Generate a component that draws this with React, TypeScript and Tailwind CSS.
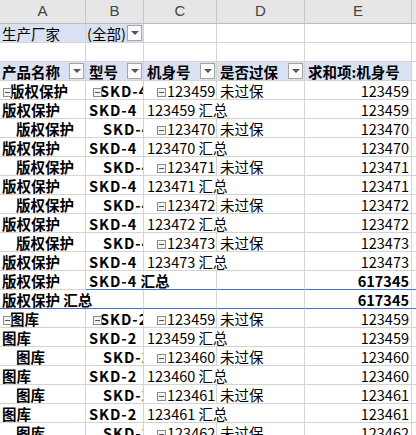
import type { ReactNode } from "react";

// column widths incl. right gridline
const COLS = [86, 58, 73, 88, 107];
const LETTERS = ["A", "B", "C", "D", "E"];

interface Cell {
  t?: ReactNode;
  span?: number;
  bold?: boolean;
  right?: boolean;
  wide?: boolean;
  pl?: number;
  icon?: number; // left offset of the ⊟ box
  bg?: boolean;
  dd?: boolean;
}

function Minus({ left }: { left: number }) {
  return (
    <span
      className="absolute top-[7px] flex h-[9px] w-[9px] items-center justify-center border border-[#8c8c8c] bg-[#f4f4f4]"
      style={{ left }}
    >
      <span className="h-px w-[5px] bg-[#555]" />
    </span>
  );
}

function Dropdown() {
  return (
    <span className="absolute right-[1px] top-[1px] flex h-[16px] w-[15px] items-center justify-center border border-[#a6a6a6] bg-[#fafafa]">
      <span className="h-0 w-0 border-x-[4px] border-t-[4px] border-x-transparent border-t-[#555]" />
    </span>
  );
}

function Row({ cells, blue }: { cells: Cell[]; blue?: number }) {
  let col = 0;
  return (
    <div className="flex h-[19px]">
      {cells.map((c, i) => {
        const span = c.span ?? 1;
        const w = COLS.slice(col, col + span).reduce((a, b) => a + b, 0);
        const isBlue = blue !== undefined && col >= blue;
        col += span;
        return (
          <div
            key={i}
            className={`relative shrink-0 overflow-hidden whitespace-nowrap border-r border-r-[#d4d4d4] border-b text-[14.5px] leading-[20px] text-black ${
              isBlue ? "border-b-[#4472c4]" : "border-b-[#d4d4d4]"
            } ${c.bg ? "bg-[#d9e1f2]" : "bg-white"} ${c.bold ? "font-bold" : ""} ${
              c.right ? "pr-[2px] text-right" : ""
            } ${c.wide ? "tracking-[1px]" : ""}`}
            style={{ width: w, paddingLeft: c.right ? 0 : c.pl ?? 2 }}
          >
            {c.icon !== undefined && <Minus left={c.icon} />}
            {c.t}
            {c.dd && <Dropdown />}
          </div>
        );
      })}
      <div
        className={`flex-1 border-b ${blue !== undefined ? "border-b-[#4472c4]" : "border-b-[#d4d4d4]"}`}
      />
    </div>
  );
}

function group(name: string, model: string, ids: string[], last: string): Cell[][] {
  const rows: Cell[][] = [];
  ids.forEach((id, k) => {
    rows.push([
      k === 0
        ? { t: name, bold: true, icon: 3, pl: 10 }
        : { t: name, bold: true, pl: 16 },
      k === 0
        ? { t: model, bold: true, wide: true, icon: 7, pl: 14 }
        : { t: model, bold: true, wide: true, pl: 17 },
      { t: id, icon: 13, pl: 23 },
      { t: "未过保", pl: 3 },
      { t: id, right: true },
    ]);
    rows.push([
      { t: name, bold: true },
      { t: model, bold: true, wide: true, pl: 3 },
      { t: `${id} 汇总`, pl: 3, span: 2 },
      { t: id, right: true },
    ]);
  });
  if (last) {
    rows.push([
      { t: name, bold: true },
      {
        t: (
          <>
            <span className="tracking-[1px]">{model}</span> 汇总
          </>
        ),
        bold: true,
        pl: 3,
        span: 2,
      },
      {},
      { t: last, right: true, bold: true },
    ]);
  }
  return rows;
}

export default function App() {
  const g1 = group("版权保护", "SKD-4", ["123459", "123470", "123471", "123472", "123473"], "617345");
  const g2 = group("图库", "SKD-2", ["123459", "123460", "123461", "123462"], "");

  return (
    <div
      className="h-[435px] w-[416px] overflow-hidden bg-white"
      style={{ fontFamily: '"Noto Sans CJK SC", "Liberation Sans", sans-serif' }}
    >
      <div className="flex h-[24px] border-b border-b-[#bcbcbc] bg-[#e6e6e6]">
        {LETTERS.map((l, i) => (
          <div
            key={l}
            className="flex shrink-0 items-center justify-center border-r border-r-[#c6c6c6] text-[15px] text-[#444]"
            style={{ width: COLS[i], fontFamily: '"Liberation Sans", sans-serif' }}
          >
            {l}
          </div>
        ))}
        <div className="flex-1" />
      </div>

      <Row
        cells={[
          { t: "生产厂家", bg: true },
          { t: "(全部)", bg: true, pl: 1, dd: true },
          {},
          {},
          {},
        ]}
      />
      <Row cells={[{}, {}, {}, {}, {}]} />
      <Row
        cells={[
          { t: "产品名称", bg: true, bold: true, dd: true },
          { t: "型号", bg: true, bold: true, pl: 3, dd: true },
          { t: "机身号", bg: true, bold: true, pl: 3, dd: true },
          { t: "是否过保", bg: true, bold: true, pl: 3, dd: true },
          { t: "求和项:机身号", bg: true, bold: true, pl: 3 },
        ]}
      />
      {g1.map((r, i) => (
        <Row key={`a${i}`} cells={r} blue={i === g1.length - 1 ? 1 : undefined} />
      ))}
      <Row
        blue={0}
        cells={[
          { t: "版权保护 汇总", bold: true, span: 2 },
          {},
          {},
          { t: "617345", right: true, bold: true },
        ]}
      />
      {g2.map((r, i) => (
        <Row key={`b${i}`} cells={r} />
      ))}
    </div>
  );
}
